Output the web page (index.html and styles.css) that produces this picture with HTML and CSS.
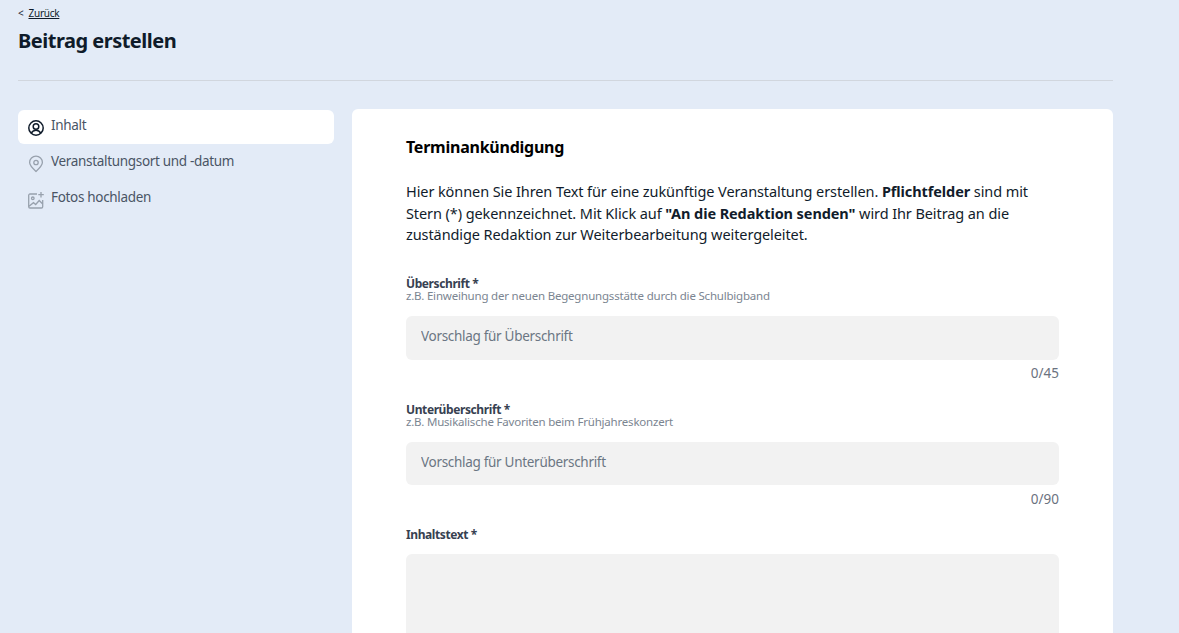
FILE: index.html
```html
<!DOCTYPE html>
<html lang="de">
<head>
<meta charset="utf-8">
<title>Beitrag erstellen</title>
<link rel="stylesheet" href="styles.css">
</head>
<body>
<div class="page">
  <header class="head">
    <div class="back"><span class="back-mark">&lt;</span><a href="#" class="back-link">Zurück</a></div>
    <h1 class="title">Beitrag erstellen</h1>
  </header>
  <div class="columns">
    <nav class="side">
      <a href="#" class="nav-item is-active">
        <svg class="nav-icon" viewBox="0 0 16 16" fill="none" stroke="#0f1b2a" stroke-width="1.5"><circle cx="8" cy="8" r="7.2"/><circle cx="8" cy="6.500" r="2.800"/><path d="M3.300 13.300c.8-2 2.500-3.100 4.700-3.100s3.900 1.100 4.700 3.100"/></svg>
        <span>Inhalt</span>
      </a>
      <a href="#" class="nav-item">
        <svg class="nav-icon" viewBox="0 0 16 16" fill="none" stroke="#98a1ad" stroke-width="1.3"><path d="M8 15.400C4.500 12.200 1.600 9.500 1.600 6.500a6.400 6.400 0 0 1 12.800 0C14.400 9.500 11.500 12.200 8 15.400z"/><circle cx="8" cy="6.500" r="2.200"/></svg>
        <span>Veranstaltungsort und -datum</span>
      </a>
      <a href="#" class="nav-item">
        <svg class="nav-icon" viewBox="0 0 16 16" fill="none" stroke="#98a1ad" stroke-width="1.3"><path d="M9 2H2A1.300 1.300 0 0 0 .7 3.300v11.400A1.300 1.300 0 0 0 2 16h11.400a1.300 1.300 0 0 0 1.300-1.300V8"/><path d="M13 0v5.500M10.300 2.700h5.500"/><circle cx="4.800" cy="6.300" r="1.300"/><path d="M1 14.300l4.500-3.600 2.200 1.800 3.500-4 3.500 3.500"/></svg>
        <span>Fotos hochladen</span>
      </a>
    </nav>
    <main class="card">
      <h2 class="card-title">Terminankündigung</h2>
      <p class="intro">Hier können Sie Ihren Text für eine zukünftige Veranstaltung erstellen. <b>Pflichtfelder</b> sind mit Stern (*) gekennzeichnet. Mit Klick auf <b>"An die Redaktion senden"</b> wird Ihr Beitrag an die zuständige Redaktion zur Weiterbearbeitung weitergeleitet.</p>
      <div class="field">
        <label class="label">Überschrift *</label>
        <div class="hint">z.B. Einweihung der neuen Begegnungsstätte durch die Schulbigband</div>
        <input class="input" type="text" placeholder="Vorschlag für Überschrift">
        <div class="count">0/45</div>
      </div>
      <div class="field">
        <label class="label">Unterüberschrift *</label>
        <div class="hint">z.B. Musikalische Favoriten beim Frühjahreskonzert</div>
        <input class="input" type="text" placeholder="Vorschlag für Unterüberschrift">
        <div class="count">0/90</div>
      </div>
      <div class="field">
        <label class="label label-solo">Inhaltstext *</label>
        <textarea class="area"></textarea>
      </div>
    </main>
  </div>
</div>
</body>
</html>
```
FILE: styles.css
```css
* { box-sizing: border-box; }
html, body { margin: 0; height: 633px; overflow: hidden; }
body {
  background: #e3ebf7;
  font-family: "Noto Sans", "Open Sans", sans-serif;
  color: #0f1b2a;
}
.page { width: 1095px; margin-left: 18px; }
.head { height: 81px; border-bottom: 1px solid #d1d6de; padding-top: 6px; }
.back { display: flex; gap: 5px; font-size: 10px; line-height: 14px; letter-spacing: -0.25px; color: #1f2a37; }
.back-link { color: #0f1b2a; text-decoration: underline; }
.title { margin: 8px 0 0; font-size: 20px; line-height: 26px; font-weight: 700; letter-spacing: -0.5px; color: #0f1b2a; }
.columns { display: flex; gap: 18px; padding-top: 28px; align-items: flex-start; }
.side { width: 316px; flex: none; padding-top: 1px; display: flex; flex-direction: column; gap: 2px; }
.nav-item {
  display: flex; align-items: flex-start; gap: 7px; height: 34px;
  padding: 6px 10px; border-radius: 6px;
  font-size: 13.500px; line-height: 18px; letter-spacing: -0.32px; color: #4a5565; text-decoration: none;
}
.nav-item.is-active { background: #fff; }
.nav-icon { width: 16px; height: 16px; flex: none; margin-top: 3.500px; overflow: visible; }
.card { flex: 1; background: #fff; border-radius: 6px 6px 0 0; height: 600px; padding: 27px 54px 0; }
.card-title { margin: 0; font-size: 16px; line-height: 22px; font-weight: 700; letter-spacing: -0.24px; color: #000; }
.intro { margin: 23px 0 0; font-size: 14.500px; line-height: 21.700px; letter-spacing: -0.09px; color: #111c2b; }
.intro b { font-weight: 700; }
.field { display: block; }
.intro + .field { margin-top: 31px; }
.label { display: block; font-size: 12px; line-height: 13px; font-weight: 700; letter-spacing: -0.4px; color: #374151; }
.label-solo { margin-top: 1px; margin-bottom: 12.500px; }
.hint { font-size: 11.500px; line-height: 12px; letter-spacing: -0.2px; color: #7b8591; }
.input {
  display: block; width: 100%; height: 43.600px; margin-top: 14px;
  border: 0; border-radius: 6px; background: #f2f2f2; padding: 0 15px 3px;
  font: 13.500px "Noto Sans", sans-serif; letter-spacing: -0.3px; color: #111;
}
.input::placeholder { color: #6b7683; opacity: 1; }
.count { margin-top: 5.400px; height: 28px; font-size: 13.500px; line-height: 16px; text-align: right; color: #6b7280; }
.field + .field { margin-top: 9.600px; }
.area { display: block; width: 100%; height: 200px; border: 0; border-radius: 6px; background: #f2f2f2; resize: none; }
```
